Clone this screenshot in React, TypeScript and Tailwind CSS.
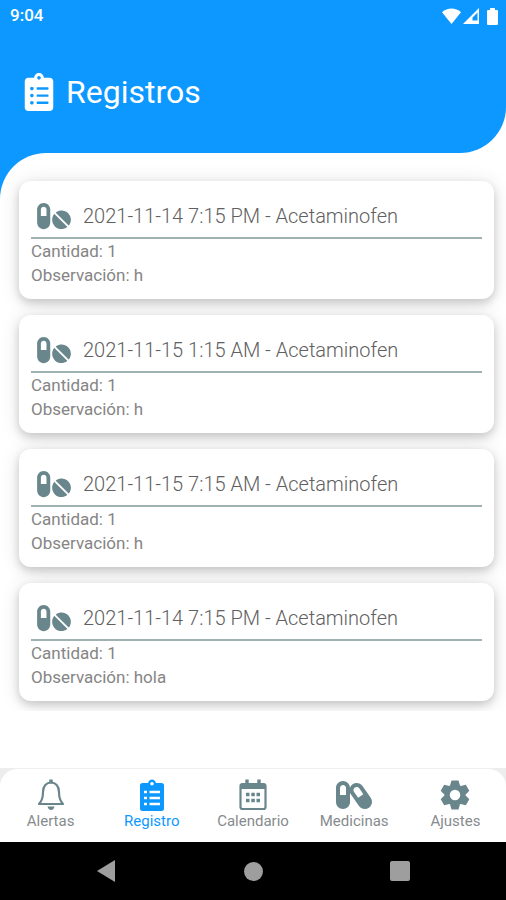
import { FaCapsules, FaClipboardList, FaPills } from "react-icons/fa";

const records = [
  { date: "2021-11-14 7:15 PM", medicine: "Acetaminofen", amount: 1, note: "h" },
  { date: "2021-11-15 1:15 AM", medicine: "Acetaminofen", amount: 1, note: "h" },
  { date: "2021-11-15 7:15 AM", medicine: "Acetaminofen", amount: 1, note: "h" },
  { date: "2021-11-14 7:15 PM", medicine: "Acetaminofen", amount: 1, note: "hola" },
];

function BellIcon() {
  return (
    <svg width="28" height="32" viewBox="0 0 28 32" fill="none" stroke="currentColor" strokeWidth="2.200">
      <path d="M14 .5v4" strokeWidth="3.500" />
      <path d="M2 25c3.500-3.500 4-7 4-12 0-6 3.500-9.500 8-9.500s8 3.500 8 9.500c0 5 .5 8.500 4 12z" strokeLinejoin="round" />
      <path d="M10.500 27.500h7q-1 3.500-3.500 3.500t-3.500-3.500z" fill="currentColor" stroke="none" />
    </svg>
  );
}

function ClipboardIcon() {
  return (
    <svg width="24" height="32" viewBox="0 0 24 32" fill="none">
      <path
        fill="currentColor"
        fillRule="evenodd"
        d="M2.500 4H8q1-3.500 4-3.500T16 4h5.500Q24 4 24 6.500v23q0 2.500-2.500 2.500h-19Q0 32 0 29.500v-23Q0 4 2.500 4zM12 3a1.800 1.800 0 1 0 0 3.600A1.800 1.800 0 1 0 12 3z"
      />
      <path
        stroke="white"
        strokeWidth="2.400"
        d="M4 13h3M9.500 13H20M4 19h3M9.500 19H20M4 25h3M9.500 25H20"
      />
    </svg>
  );
}

function CalendarIcon() {
  return (
    <svg width="28" height="32" viewBox="0 0 28 32" fill="none" stroke="currentColor" strokeWidth="2.200">
      <rect x="1.500" y="5" width="25" height="25" rx="2" />
      <path d="M1.500 7.500h25" strokeWidth="5" />
      <path d="M8 .5v5M20 .5v5" strokeWidth="3.400" />
      <path d="M7 15.500h3.500M12.300 15.500h3.500M17.500 15.500h3.500M7 21.500h3.500M12.300 21.500h3.500M17.500 21.500h3.500" strokeWidth="3.500" />
    </svg>
  );
}

function GearIcon() {
  return (
    <svg width="30" height="30" viewBox="-15 -15 30 30" fill="none" stroke="currentColor">
      <circle r="8" strokeWidth="5.500" />
      <path d="M-3.500-14.500h7l1.500 5H-5zM-3.500 14.500h7l1.500-5H-5z" fill="currentColor" stroke="none" />
      <path d="M-3.500-14.500h7l1.500 5H-5zM-3.500 14.500h7l1.500-5H-5z" fill="currentColor" stroke="none" transform="rotate(60)" />
      <path d="M-3.500-14.500h7l1.500 5H-5zM-3.500 14.500h7l1.500-5H-5z" fill="currentColor" stroke="none" transform="rotate(120)" />
    </svg>
  );
}

const tabs = [
  { label: "Alertas", icon: <BellIcon /> },
  { label: "Registro", icon: <ClipboardIcon />, active: true },
  { label: "Calendario", icon: <CalendarIcon /> },
  { label: "Medicinas", icon: <FaCapsules className="w-9 h-8" /> },
  { label: "Ajustes", icon: <GearIcon /> },
];

function StatusBar() {
  return (
    <div className="flex items-center justify-between h-8 pl-[10px] pr-2">
      <span className="text-[17px] font-medium">9:04</span>
      <div className="flex items-center gap-[2px]">
        <svg width="19" height="16" viewBox="0 0 19 16" fill="currentColor">
          <path d="M0 4.200C5.500-.6 13.500-.6 19 4.200L9.500 16z" />
        </svg>
        <svg width="16" height="16" viewBox="0 0 16 16" fill="currentColor">
          <path fillRule="evenodd" d="M16 0v16H0zM14.500 4.500v8H9.500V9.500z" />
        </svg>
        <svg className="ml-[6px]" width="11" height="17" viewBox="0 0 11 17" fill="currentColor">
          <path d="M3 0h5v2h2q1 0 1 1v13q0 1-1 1H1q-1 0-1-1V3q0-1 1-1h2z" />
        </svg>
      </div>
    </div>
  );
}

function RecordCard({ record }: { record: (typeof records)[number] }) {
  return (
    <li className="relative bg-white rounded-xl px-3 pt-4 h-[118px]">
      <div className="flex items-center gap-3 h-[42px] pl-[6px] pb-[2px] border-b-2 border-[#9fb1b1]">
        <FaPills className="w-[34px] h-[30px] text-[#69868c]" />
        <h2 className="text-xl font-light text-[#606060]">
          {record.date} - {record.medicine}
        </h2>
      </div>
      <p className="text-[17px] leading-6 text-[#858585]">Cantidad: {record.amount}</p>
      <p className="text-[17px] leading-6 text-[#858585]">Observación: {record.note}</p>
    </li>
  );
}

export default function App() {
  return (
    <div className="flex flex-col min-h-screen bg-white font-['Roboto',sans-serif]">
      <header className="h-[153px] bg-[#0c98ff] text-white rounded-br-[46px]">
        <StatusBar />
        <div className="flex items-center gap-3 pl-6 pt-10">
          <FaClipboardList className="w-[30px] h-[38px]" />
          <h1 className="text-[32px] leading-[40px]">Registros</h1>
        </div>
      </header>

      <main className="flex-1 bg-linear-to-b from-[#0c98ff] from-[46px] to-white to-[46px]">
        <div className="h-full bg-white rounded-tl-[46px]">
          <ul className="flex flex-col gap-4 pt-7 pb-[10px] pl-[19px] pr-3 overflow-hidden *:shadow-[0_4px_8px_rgba(0,0,0,0.16),0_2px_20px_rgba(0,0,0,0.12)]">
            {records.map((record, i) => (
              <RecordCard key={i} record={record} />
            ))}
          </ul>
        </div>
      </main>

      <div className="bg-[#ededed]">
        <nav className="grid grid-cols-5 h-[74px] pt-[10px] bg-white rounded-t-[18px] border-t border-[#eeeeee]">
          {tabs.map((tab) => (
            <button
              key={tab.label}
              className={`flex flex-col items-center ${tab.active ? "text-[#0c98ff]" : "text-[#69868c]"}`}
            >
              <span className="flex items-center justify-center h-8">{tab.icon}</span>
              <span className={`text-[15px] leading-5 ${tab.active ? "" : "text-[#868b8e]"}`}>{tab.label}</span>
            </button>
          ))}
        </nav>
      </div>

      <div className="flex items-center justify-between h-[58px] px-24 bg-black text-[#9e9e9e]">
        <button aria-label="Atrás">
          <svg width="20" height="22" viewBox="0 0 20 22" fill="currentColor">
            <path d="M19 0v22L1 11z" />
          </svg>
        </button>
        <button aria-label="Inicio" className="w-[19px] h-[19px] rounded-full bg-[#9e9e9e]" />
        <button aria-label="Recientes" className="w-5 h-5 rounded-xs bg-[#9e9e9e]" />
      </div>
    </div>
  );
}
